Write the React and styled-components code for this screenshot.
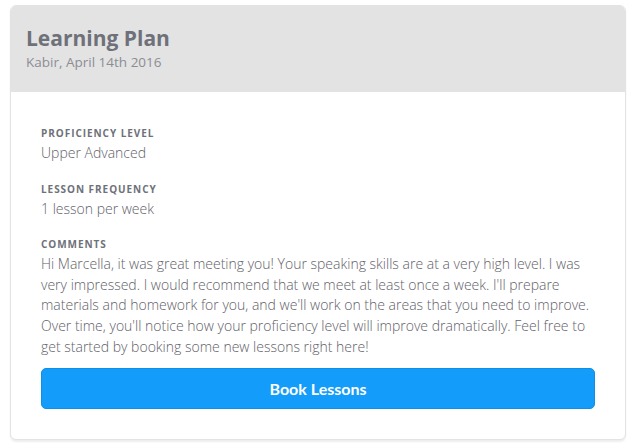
import React from "react";
import styled, { createGlobalStyle } from "styled-components";

const Global = createGlobalStyle`
  html, body { margin: 0; padding: 0; background: #ffffff; }
  body { font-family: "Open Sans", "Noto Sans", sans-serif; -webkit-font-smoothing: antialiased; }
`;

const Page = styled.div`
  padding: 5px 9px 8px 10px;
`;

const Card = styled.div`
  border: 1px solid #e3e3e3;
  border-radius: 6px;
  box-shadow: 0 2px 2px rgba(0, 0, 0, 0.07);
  overflow: hidden;
  background: #fff;
`;

const Header = styled.div`
  background: #e3e3e3;
  padding: 19px 15px 19px 15px;
  height: 86px;
  box-sizing: border-box;
`;

const Title = styled.h1`
  margin: 0;
  font-size: 21px;
  line-height: 27px;
  font-weight: 700;
  color: #6e717a;
`;

const Subtitle = styled.div`
  font-size: 13.5px;
  line-height: 20px;
  color: #8b8d94;
`;

const Body = styled.div`
  padding: 34px 30px 30px 30px;
  display: flex;
  flex-direction: column;
`;

const Field = styled.div`
  display: flex;
  flex-direction: column;
  margin-bottom: ${(p) => p.$gap}px;
`;

const Label = styled.div`
  font-size: 10px;
  line-height: 14px;
  font-weight: 700;
  letter-spacing: 0.95px;
  text-transform: uppercase;
  color: #6e717a;
  margin-bottom: 3px;
`;

const Value = styled.div`
  font-size: 14px;
  line-height: 20.6px;
  font-weight: 300;
  color: #5f6169;
`;

const Button = styled.button`
  height: 41px;
  border: 1px solid #0f8fe6;
  border-radius: 5px;
  background: #139cf9;
  color: #fff;
  font-family: Lato, "Open Sans", sans-serif;
  font-size: 16px;
  font-weight: 700;
  cursor: pointer;
`;

export default function App() {
  return (
    <>
      <Global />
      <Page>
        <Card>
          <Header>
            <Title>Learning Plan</Title>
            <Subtitle>Kabir, April 14th 2016</Subtitle>
          </Header>
          <Body>
            <Field $gap={18}>
              <Label>Proficiency Level</Label>
              <Value>Upper Advanced</Value>
            </Field>
            <Field $gap={18}>
              <Label>Lesson Frequency</Label>
              <Value>1 lesson per week</Value>
            </Field>
            <Field $gap={11}>
              <Label>Comments</Label>
              <Value>
                Hi Marcella, it was great meeting you! Your speaking skills are at a very high level. I was
                very impressed. I would recommend that we meet at least once a week. I'll prepare
                materials and homework for you, and we'll work on the areas that you need to improve.
                Over time, you'll notice how your proficiency level will improve dramatically. Feel free to
                get started by booking some new lessons right here!
              </Value>
            </Field>
            <Button>Book Lessons</Button>
          </Body>
        </Card>
      </Page>
    </>
  );
}
